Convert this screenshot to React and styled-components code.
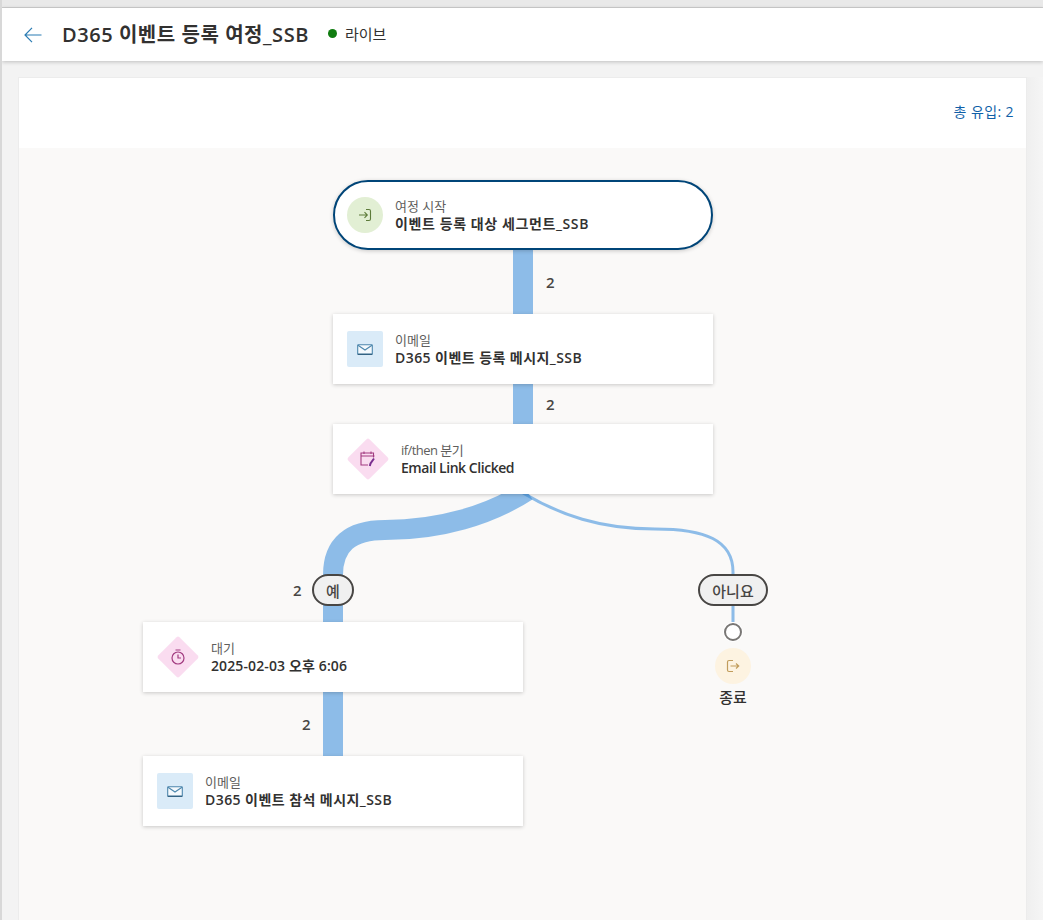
import React from "react"
import styled, { createGlobalStyle } from "styled-components"

const FONT = `"Open Sans", "Noto Sans CJK KR", sans-serif`

// canvas origin sits at page (19, 148)
const OX = 19
const OY = 148

const GlobalStyle = createGlobalStyle`
  html, body {
    margin: 0;
    padding: 0;
    height: 100%;
    overflow: hidden;
    background: #f3f3f3;
    font-family: ${FONT};
  }
  * { box-sizing: border-box; }
`

const Page = styled.div`
  width: 1043px;
  height: 920px;
  display: flex;
  flex-direction: column;
  overflow: hidden;
  border-left: 2px solid #d8d8d8;
`

const TopStrip = styled.div`
  height: 8px;
  flex: none;
  background: #e9e9e9;
  border-bottom: 1px solid #cfcfcf;
`

const Header = styled.header`
  height: 53px;
  flex: none;
  display: flex;
  align-items: center;
  background: #fff;
  padding-left: 22px;
  box-shadow: 0 1px 4px rgba(0, 0, 0, 0.22);
  position: relative;
  z-index: 1;
`

const BackButton = styled.div`
  width: 18px;
  height: 18px;
  margin-right: 20px;
  color: #2b7cb3;
  display: flex;
`

const Title = styled.h1`
  margin: 0 19px 0 0;
  font-size: 20px;
  line-height: 26px;
  font-weight: 600;
  letter-spacing: 0.55px;
  color: #323130;
`

const Status = styled.div`
  display: flex;
  align-items: center;
  gap: 8px;
  font-size: 15px;
  color: #323130;
  margin-bottom: 3px;
`

const StatusDot = styled.span`
  width: 9px;
  height: 9px;
  border-radius: 50%;
  background: #107c10;
`

const Main = styled.main`
  flex: 1;
  display: flex;
  padding: 16px 0 0 16px;
  min-height: 0;
`

const Panel = styled.section`
  width: 1009px;
  display: flex;
  flex-direction: column;
  background: #fff;
  border: 1px solid #ececec;
  border-bottom: 0;
`

const PanelTop = styled.div`
  height: 70px;
  flex: none;
  display: flex;
  align-items: center;
  justify-content: flex-end;
  padding: 0 12px 4px 0;
  font-size: 14px;
  letter-spacing: 0.4px;
  color: #0f5fa8;
  background: #fff;
`

const Canvas = styled.div`
  flex: 1;
  position: relative;
  background: #faf9f8;
  overflow: hidden;
`

const RightShade = styled.div`
  width: 16px;
  background: linear-gradient(to right, #efefef, #f5f5f5);
`

const Wires = styled.svg`
  position: absolute;
  left: 0;
  top: 0;
  width: 1007px;
  height: 772px;
`

const Node = styled.div`
  position: absolute;
  left: ${(p) => p.$x - OX}px;
  top: ${(p) => p.$y - OY}px;
  width: 380px;
  height: 70px;
  display: flex;
  align-items: center;
  padding-left: 14px;
  background: #fff;
  box-shadow: 0 1px 4px rgba(0, 0, 0, 0.2);
`

const StartNode = styled(Node)`
  border: 2px solid #004578;
  border-radius: 35px;
  padding-left: 12px;
`

const IconCircle = styled.div`
  width: 36px;
  height: 36px;
  border-radius: 50%;
  background: ${(p) => p.$bg};
  display: flex;
  align-items: center;
  justify-content: center;
  flex: none;
`

const IconSquare = styled.div`
  width: 36px;
  height: 36px;
  border-radius: 2px;
  background: #daebf8;
  display: flex;
  align-items: center;
  justify-content: center;
  flex: none;
`

const IconDiamond = styled.div`
  width: 42px;
  height: 42px;
  flex: none;
  position: relative;
  display: flex;
  align-items: center;
  justify-content: center;

  &::before {
    content: "";
    position: absolute;
    left: 6px;
    top: 6px;
    width: 30px;
    height: 30px;
    border-radius: 2px;
    background: #fadcf0;
    transform: rotate(45deg);
  }

  svg {
    position: relative;
  }
`

const NodeText = styled.div`
  margin-left: 12px;
  display: flex;
  flex-direction: column;
  margin-top: 2px;
`

const NodeLabel = styled.span`
  font-size: 13px;
  line-height: 15px;
  letter-spacing: ${(p) => p.$track || 0}px;
  color: #605e5c;
`

const NodeName = styled.span`
  font-size: 14px;
  line-height: 20px;
  font-weight: 600;
  letter-spacing: ${(p) => p.$track || 0}px;
  color: #323130;
`

const Count = styled.span`
  position: absolute;
  left: ${(p) => p.$x - OX}px;
  top: ${(p) => p.$y - OY}px;
  font-size: 15px;
  line-height: 20px;
  font-weight: 600;
  color: #484644;
`

const BranchPill = styled.div`
  position: absolute;
  left: ${(p) => p.$x - OX}px;
  top: ${574 - OY}px;
  width: ${(p) => p.$w}px;
  height: 32px;
  border: 2px solid #484644;
  border-radius: 16px;
  background: #f0f0f0;
  display: flex;
  align-items: center;
  justify-content: center;
  font-size: 15px;
  font-weight: 500;
  color: #484644;
`

const EndDot = styled.div`
  position: absolute;
  left: ${723 - OX}px;
  top: ${622 - OY}px;
  width: 20px;
  height: 20px;
  border-radius: 50%;
  background: #fff;
  display: flex;
  align-items: center;
  justify-content: center;

  &::after {
    content: "";
    width: 14px;
    height: 14px;
    border-radius: 50%;
    border: 2px solid #797775;
    background: #fff;
  }
`

const EndNode = styled.div`
  position: absolute;
  left: ${693 - OX}px;
  top: ${648 - OY}px;
  width: 80px;
  display: flex;
  flex-direction: column;
  align-items: center;
  gap: 3px;
`

const EndLabel = styled.span`
  font-size: 15px;
  line-height: 20px;
  font-weight: 500;
  color: #323130;
`

const ArrowLeft = () => (
  <svg width="18" height="18" viewBox="0 0 18 18" fill="none" stroke="currentColor" strokeWidth="1.2">
    <path d="M1 9 H17.5 M8 1.8 L1 9 L8 16.2" />
  </svg>
)

const EnterIcon = () => (
  <svg width="14" height="14" viewBox="0 0 14 14" fill="none" stroke="#5d7b3a" strokeWidth="1.1">
    <path d="M1 7 H9 M6.5 4.2 L9.3 7 L6.5 9.8" />
    <path d="M8 1.5 H11 Q12.5 1.5 12.5 3 V11 Q12.5 12.5 11 12.5 H8" />
  </svg>
)

const MailIcon = () => (
  <svg width="16" height="11" viewBox="0 0 16 11" fill="none" stroke="#4d87ad" strokeWidth="1.1">
    <rect x="0.7" y="0.7" width="14.6" height="9.6" rx="0.6" fill="#f4f9fd" />
    <path d="M1 1.2 L8 6 L15 1.2" stroke="#4d87ad" />
    <path d="M0.7 10.3 H15.3" stroke="#2f5f80" strokeWidth="1.3" />
  </svg>
)

const BranchIcon = () => (
  <svg width="16" height="16" viewBox="0 0 16 16" fill="none" stroke="#a23b80" strokeWidth="1.1">
    <path d="M13.5 6.5 V2 H1 V14 H8" />
    <path d="M1 5 H14.5 M4 0.5 V3 M11 0.5 V3" />
    <path d="M14 7.5 L10.5 12.5 L9.8 15" stroke="#7a2f8f" strokeWidth="2" />
  </svg>
)

const TimerIcon = () => (
  <svg width="16" height="16" viewBox="0 0 16 16" fill="none" stroke="#a23b80" strokeWidth="1.2">
    <circle cx="8" cy="9" r="6" />
    <path d="M5.5 1 H10.5 M8 5.5 V9 H11" />
  </svg>
)

const ExitIcon = () => (
  <svg width="14" height="14" viewBox="0 0 14 14" fill="none" stroke="#c19c5b" strokeWidth="1.2">
    <path d="M7 1.5 H3 Q1.5 1.5 1.5 3 V11 Q1.5 12.5 3 12.5 H7" />
    <path d="M4.5 7 H12.5 M10 4.5 L12.7 7 L10 9.5" />
  </svg>
)

const WIRE = "#3a8fdc"

const App = () => {
  return (
    <Page>
      <GlobalStyle />
      <TopStrip />
      <Header>
        <BackButton><ArrowLeft /></BackButton>
        <Title>D365 이벤트 등록 여정_SSB</Title>
        <Status><StatusDot />라이브</Status>
      </Header>
      <Main>
        <Panel>
          <PanelTop>총 유입: 2</PanelTop>
          <Canvas>
            <Wires viewBox={`${OX} ${OY} 1007 772`} fill="none" strokeOpacity="0.57">
              <path d="M523 250 V490" stroke={WIRE} strokeWidth="20" />
              <path d="M523 493 C560 515 600 529 655 529 C705 529 733 540 733 572 V622" stroke={WIRE} strokeWidth="3" />
              <path d="M527 491 C490 515 440 530 385 530 C350 530 333 545 333 575 V760" stroke={WIRE} strokeWidth="20" />
            </Wires>

            <StartNode $x={333} $y={180}>
              <IconCircle $bg="#e2efd4"><EnterIcon /></IconCircle>
              <NodeText>
                <NodeLabel>여정 시작</NodeLabel>
                <NodeName $track={0.6}>이벤트 등록 대상 세그먼트_SSB</NodeName>
              </NodeText>
            </StartNode>
            <Count $x={546} $y={272}>2</Count>

            <Node $x={333} $y={314}>
              <IconSquare><MailIcon /></IconSquare>
              <NodeText>
                <NodeLabel>이메일</NodeLabel>
                <NodeName $track={0.44}>D365 이벤트 등록 메시지_SSB</NodeName>
              </NodeText>
            </Node>
            <Count $x={546} $y={394}>2</Count>

            <Node $x={333} $y={424}>
              <IconDiamond><BranchIcon /></IconDiamond>
              <NodeText>
                <NodeLabel $track={-0.55}>if/then 분기</NodeLabel>
                <NodeName $track={-0.45}>Email Link Clicked</NodeName>
              </NodeText>
            </Node>

            <Count $x={293} $y={580}>2</Count>
            <BranchPill $x={312} $w={42}>예</BranchPill>
            <BranchPill $x={698} $w={70}>아니요</BranchPill>
            <EndDot />
            <EndNode>
              <IconCircle $bg="#fdf3e1"><ExitIcon /></IconCircle>
              <EndLabel>종료</EndLabel>
            </EndNode>

            <Node $x={143} $y={622}>
              <IconDiamond><TimerIcon /></IconDiamond>
              <NodeText>
                <NodeLabel>대기</NodeLabel>
                <NodeName $track={0.12}>2025-02-03 오후 6:06</NodeName>
              </NodeText>
            </Node>
            <Count $x={302} $y={714}>2</Count>

            <Node $x={143} $y={756}>
              <IconSquare><MailIcon /></IconSquare>
              <NodeText>
                <NodeLabel>이메일</NodeLabel>
                <NodeName $track={0.44}>D365 이벤트 참석 메시지_SSB</NodeName>
              </NodeText>
            </Node>
          </Canvas>
        </Panel>
        <RightShade />
      </Main>
    </Page>
  )
}

export default App
